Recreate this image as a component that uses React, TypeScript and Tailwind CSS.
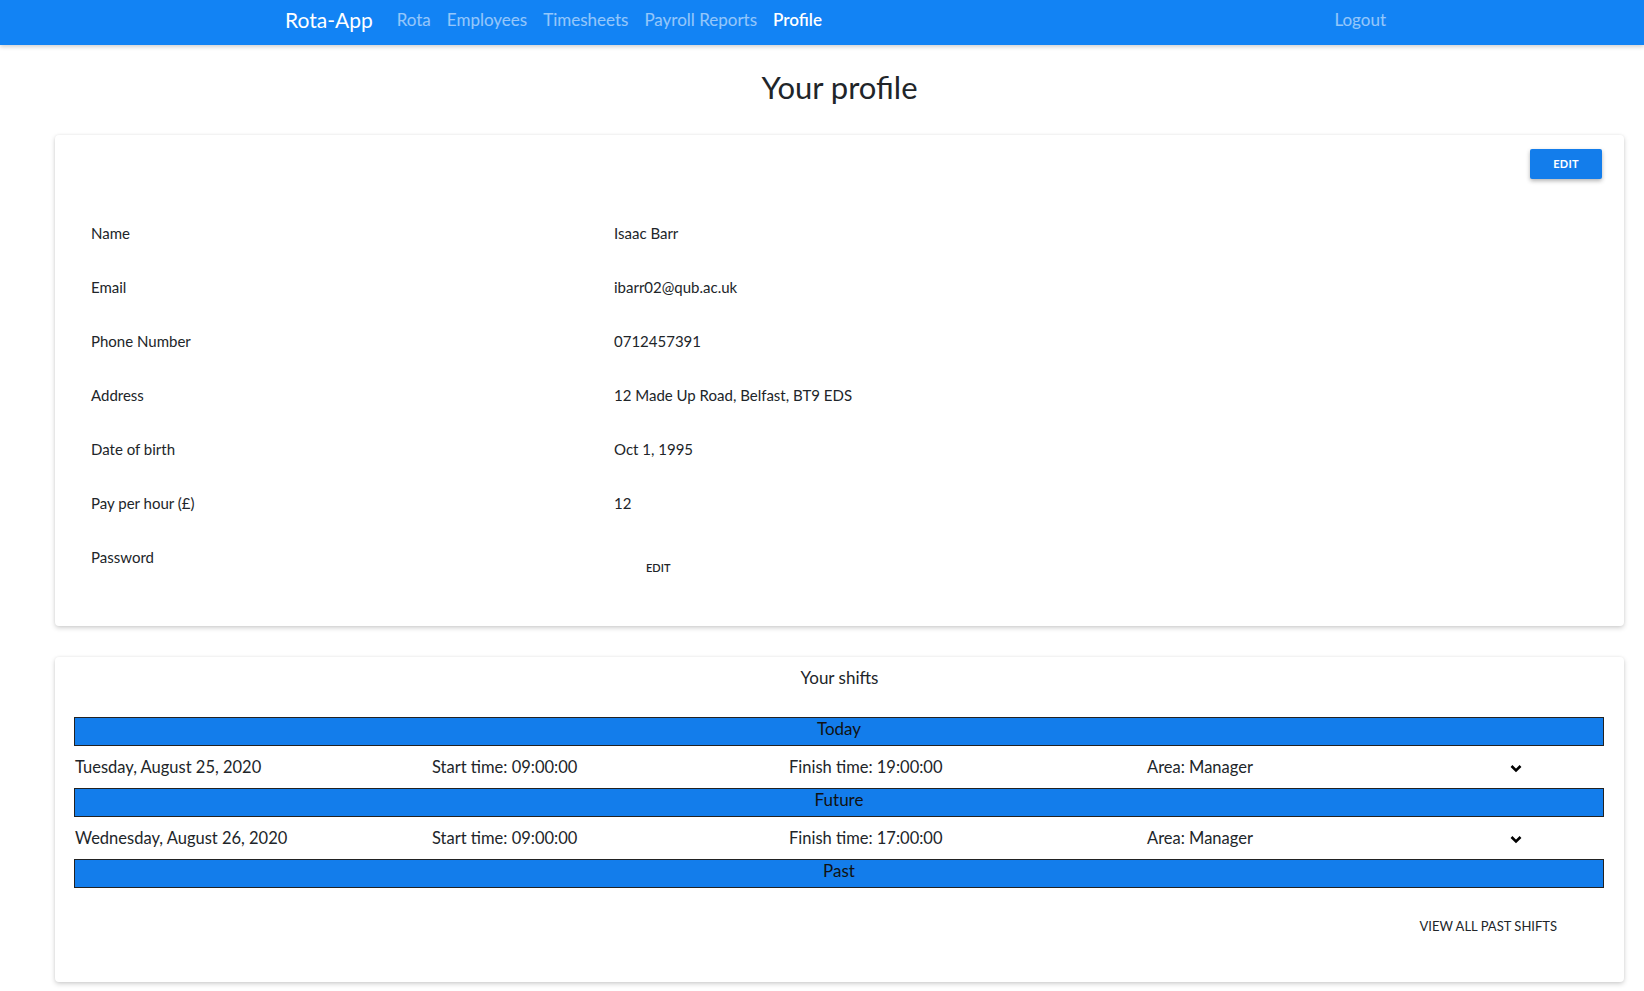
import React from "react";

const font = { fontFamily: "Lato, 'Open Sans', sans-serif" };

const profileRows: [string, string][] = [
  ["Name", "Isaac Barr"],
  ["Email", "ibarr02@qub.ac.uk"],
  ["Phone Number", "0712457391"],
  ["Address", "12 Made Up Road, Belfast, BT9 EDS"],
  ["Date of birth", "Oct 1, 1995"],
  ["Pay per hour (£)", "12"],
];

function Chevron() {
  return (
    <svg width="13" height="9" viewBox="0 0 13 9" className="text-black">
      <path d="M1.6 1.8 L6.5 6.6 L11.4 1.8" fill="none" stroke="currentColor" strokeWidth="2.8" />
    </svg>
  );
}

function SectionBar({ label }: { label: string }) {
  return (
    <div className="h-[29px] border border-[#222] bg-[#137deb] text-center text-[17px] leading-[21px] text-[#111]">
      {label}
    </div>
  );
}

function ShiftRow({ date, start, finish, area }: { date: string; start: string; finish: string; area: string }) {
  return (
    <div className="flex h-[42px] items-center text-[16.5px] text-[#212529]">
      <div className="w-[358px] pl-[1px]">{date}</div>
      <div className="w-[357px]">{start}</div>
      <div className="w-[358px]">{finish}</div>
      <div className="w-[363px]">Area: {area}</div>
      <div className="flex w-[12px] justify-center pt-[3px]">
        <Chevron />
      </div>
    </div>
  );
}

export default function App() {
  return (
    <div className="min-h-[991px] bg-white text-[#212529]" style={font}>
      {/* Navbar */}
      <nav className="relative z-10 flex h-[45px] items-center bg-[#1283f4] pb-[6px] shadow-[0_2px_4px_rgba(0,0,0,0.18)]">
        <div className="ml-[285px] flex w-[1101px] items-center justify-between">
          <div className="flex items-center">
            <span className="mr-[16px] text-[21px] text-white">Rota-App</span>
            <a className="px-[8px] text-[17px] text-white/55">Rota</a>
            <a className="px-[8px] text-[17px] text-white/55">Employees</a>
            <a className="px-[8px] text-[17px] text-white/55">Timesheets</a>
            <a className="px-[8px] text-[17px] text-white/55">Payroll Reports</a>
            <a className="px-[8px] text-[17px] font-semibold text-white">Profile</a>
          </div>
          <a className="text-[17px] text-white/55">Logout</a>
        </div>
      </nav>

      <div className="ml-[55px] mr-[20px] flex flex-col pb-[10px]">
        <h1 className="pt-[20px] pb-[26px] text-center text-[31px] leading-[44px] text-[#212529]">Your profile</h1>

        {/* Profile card */}
        <div className="h-[491px] rounded-[4px] bg-white px-[36px] pt-[14px] shadow-[0_2px_5px_rgba(0,0,0,0.18),0_0_3px_rgba(0,0,0,0.06)]">
          <div className="flex justify-end">
            <button className="mr-[-14px] h-[30px] w-[72px] rounded-[2px] bg-[#137deb] text-[11px] font-bold tracking-wide text-white shadow-[0_2px_4px_rgba(0,0,0,0.3)]">
              EDIT
            </button>
          </div>
          <div className="mt-[27px] flex flex-col">
            {profileRows.map(([label, value]) => (
              <div key={label} className="flex h-[54px] items-center text-[15px]">
                <div className="w-[523px]">{label}</div>
                <div>{value}</div>
              </div>
            ))}
            <div className="flex h-[54px] items-start pt-[16px] text-[15px]">
              <div className="w-[523px]">Password</div>
              <button className="mt-[14px] ml-[32px] text-[11px] font-semibold text-[#212529]">EDIT</button>
            </div>
          </div>
        </div>

        {/* Shifts card */}
        <div className="mt-[31px] h-[325px] rounded-[4px] bg-white px-[19px] shadow-[0_2px_5px_rgba(0,0,0,0.18),0_0_3px_rgba(0,0,0,0.06)]">
          <div className="pt-[9px] pb-[27px] text-center text-[17px] leading-[24px]">Your shifts</div>
          <div className="mr-[1px]">
            <SectionBar label="Today" />
            <ShiftRow date="Tuesday, August 25, 2020" start="Start time: 09:00:00" finish="Finish time: 19:00:00" area="Manager" />
            <SectionBar label="Future" />
            <ShiftRow date="Wednesday, August 26, 2020" start="Start time: 09:00:00" finish="Finish time: 17:00:00" area="Manager" />
            <SectionBar label="Past" />
          </div>
          <div className="flex justify-end pt-[29px] pr-[48px]">
            <button className="text-[13px] uppercase text-[#212529]">View all past shifts</button>
          </div>
        </div>
      </div>
    </div>
  );
}
